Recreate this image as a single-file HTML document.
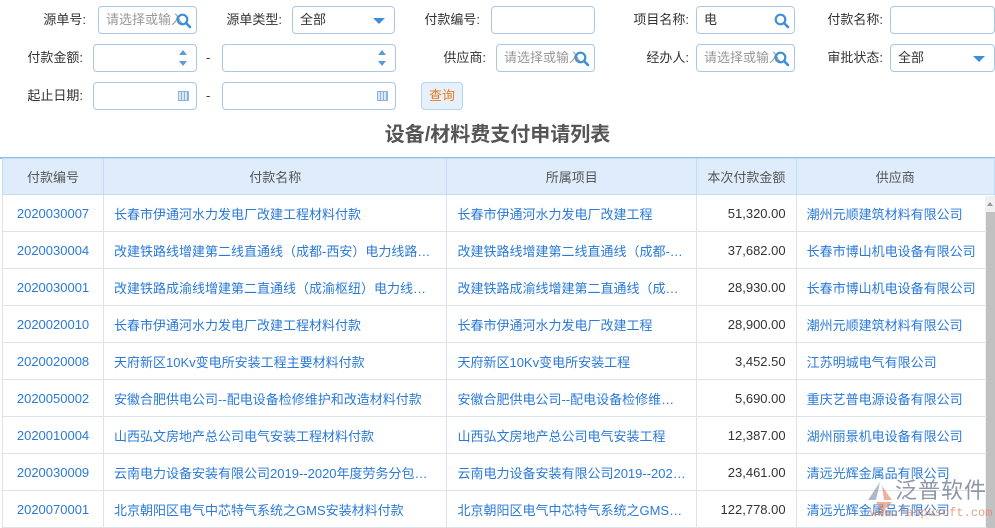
<!DOCTYPE html>
<html><head><meta charset="utf-8">
<style>
*{box-sizing:border-box;margin:0;padding:0}
body{width:995px;height:528px;overflow:hidden;background:#fff;font-family:"Liberation Sans","Noto Sans CJK SC",sans-serif;font-size:13px;color:#333;position:relative}
.a{position:absolute}
.lbl{position:absolute;text-align:right;font-size:13px;color:#333;line-height:26px}
.in{position:absolute;height:28px;border:1px solid #a9c8e8;border-radius:4px;background:#fff;line-height:26px;padding-left:7px;font-size:13px;color:#333;overflow:hidden;white-space:nowrap}
.ph{color:#999}
.srch{position:absolute;right:4px;top:6px}
.tri{position:absolute;right:9px;top:11px;width:0;height:0;border-left:6px solid transparent;border-right:6px solid transparent;border-top:6px solid #3b8fd8}
.spin{position:absolute;right:9px;top:5px;width:8px;height:16px}
.spin:before{content:"";position:absolute;left:0;top:0;border-left:4px solid transparent;border-right:4px solid transparent;border-bottom:5px solid #5a9bd8}
.spin:after{content:"";position:absolute;left:0;bottom:0;border-left:4px solid transparent;border-right:4px solid transparent;border-top:5px solid #5a9bd8}
.cal{position:absolute;right:7px;top:8px;width:11px;height:10px;border:1px solid #8fb3dd;background:repeating-linear-gradient(90deg,transparent 0 2px,#8fb3dd 2px 3px),#dbe8f7}
.dash{position:absolute;font-size:13px;line-height:26px}
table{position:absolute;left:2px;top:158px;border-collapse:collapse;table-layout:fixed}
td,th{height:37px;border:1px solid #dde3ea;white-space:nowrap;overflow:hidden;font-weight:normal;font-size:13px}
th{height:36px;background:#deecfb;color:#555;text-align:center;border-color:#c5dbf1}
td{color:#2a7ad6;padding-left:10px}
td.n{text-align:center;padding-left:0}
td.m{text-align:right;color:#333;padding-right:10px}
</style></head><body>

<div class="lbl" style="left:0;width:86px;top:7px">源单号:</div>
<div class="in" style="left:98px;top:6px;width:99px"><span class="ph">请选择或输入</span>
<svg class="srch" width="16" height="16" viewBox="0 0 16 16"><circle cx="6.5" cy="6.5" r="4.8" fill="none" stroke="#3b8fd8" stroke-width="2.2"/><path d="M10 10l4 4" stroke="#3b8fd8" stroke-width="2.6" stroke-linecap="round"/></svg></div>
<div class="lbl" style="left:200px;width:82px;top:7px">源单类型:</div>
<div class="in" style="left:292px;top:6px;width:103px">全部<i class="tri"></i></div>
<div class="lbl" style="left:400px;width:80px;top:7px">付款编号:</div>
<div class="in" style="left:491px;top:6px;width:104px"></div>
<div class="lbl" style="left:600px;width:89px;top:7px">项目名称:</div>
<div class="in" style="left:696px;top:6px;width:99px">电<svg class="srch" width="16" height="16" viewBox="0 0 16 16"><circle cx="6.5" cy="6.5" r="4.8" fill="none" stroke="#3b8fd8" stroke-width="2.2"/><path d="M10 10l4 4" stroke="#3b8fd8" stroke-width="2.6" stroke-linecap="round"/></svg></div>
<div class="lbl" style="left:800px;width:83px;top:7px">付款名称:</div>
<div class="in" style="left:890px;top:6px;width:105px"></div>

<div class="lbl" style="left:0;width:83px;top:45px">付款金额:</div>
<div class="in" style="left:93px;top:44px;width:104px"><i class="spin"></i></div>
<div class="dash" style="left:206px;top:45px">-</div>
<div class="in" style="left:222px;top:44px;width:174px"><i class="spin"></i></div>
<div class="lbl" style="left:400px;width:86px;top:45px">供应商:</div>
<div class="in" style="left:496px;top:44px;width:99px"><span class="ph">请选择或输入</span><svg class="srch" width="16" height="16" viewBox="0 0 16 16"><circle cx="6.5" cy="6.5" r="4.8" fill="none" stroke="#3b8fd8" stroke-width="2.2"/><path d="M10 10l4 4" stroke="#3b8fd8" stroke-width="2.6" stroke-linecap="round"/></svg></div>
<div class="lbl" style="left:600px;width:89px;top:45px">经办人:</div>
<div class="in" style="left:696px;top:44px;width:99px"><span class="ph">请选择或输入</span><svg class="srch" width="16" height="16" viewBox="0 0 16 16"><circle cx="6.5" cy="6.5" r="4.8" fill="none" stroke="#3b8fd8" stroke-width="2.2"/><path d="M10 10l4 4" stroke="#3b8fd8" stroke-width="2.6" stroke-linecap="round"/></svg></div>
<div class="lbl" style="left:800px;width:83px;top:45px">审批状态:</div>
<div class="in" style="left:890px;top:44px;width:105px">全部<i class="tri"></i></div>

<div class="lbl" style="left:0;width:83px;top:83px">起止日期:</div>
<div class="in" style="left:93px;top:82px;width:104px"><i class="cal"></i></div>
<div class="dash" style="left:206px;top:83px">-</div>
<div class="in" style="left:222px;top:82px;width:174px"><i class="cal"></i></div>
<div class="a" style="left:421px;top:82px;width:42px;height:28px;border:1px solid #b5d4f0;border-radius:4px;background:#e6f1fc;color:#e57a1c;text-align:center;line-height:26px">查询</div>

<div class="a" style="left:0;width:995px;top:120px;text-align:center;font-size:20px;font-weight:bold;color:#555;line-height:30px">设备/材料费支付申请列表</div>
<div class="a" style="left:0;top:157px;width:995px;height:2px;background:#8cc0ee"></div>

<table>
<colgroup><col style="width:102px"><col style="width:344px"><col style="width:250px"><col style="width:100px"><col style="width:199px"></colgroup>
<tr><th>付款编号</th><th>付款名称</th><th>所属项目</th><th>本次付款金额</th><th>供应商</th></tr>
<tr><td class="n">2020030007</td><td>长春市伊通河水力发电厂改建工程材料付款</td><td>长春市伊通河水力发电厂改建工程</td><td class="m">51,320.00</td><td>潮州元顺建筑材料有限公司</td></tr>
<tr><td class="n">2020030004</td><td>改建铁路线增建第二线直通线（成都-西安）电力线路…</td><td>改建铁路线增建第二线直通线（成都-…</td><td class="m">37,682.00</td><td>长春市博山机电设备有限公司</td></tr>
<tr><td class="n">2020030001</td><td>改建铁路成渝线增建第二直通线（成渝枢纽）电力线…</td><td>改建铁路成渝线增建第二直通线（成…</td><td class="m">28,930.00</td><td>长春市博山机电设备有限公司</td></tr>
<tr><td class="n">2020020010</td><td>长春市伊通河水力发电厂改建工程材料付款</td><td>长春市伊通河水力发电厂改建工程</td><td class="m">28,900.00</td><td>潮州元顺建筑材料有限公司</td></tr>
<tr><td class="n">2020020008</td><td>天府新区10Kv变电所安装工程主要材料付款</td><td>天府新区10Kv变电所安装工程</td><td class="m">3,452.50</td><td>江苏明城电气有限公司</td></tr>
<tr><td class="n">2020050002</td><td>安徽合肥供电公司--配电设备检修维护和改造材料付款</td><td>安徽合肥供电公司--配电设备检修维…</td><td class="m">5,690.00</td><td>重庆艺普电源设备有限公司</td></tr>
<tr><td class="n">2020010004</td><td>山西弘文房地产总公司电气安装工程材料付款</td><td>山西弘文房地产总公司电气安装工程</td><td class="m">12,387.00</td><td>湖州丽景机电设备有限公司</td></tr>
<tr><td class="n">2020030009</td><td>云南电力设备安装有限公司2019--2020年度劳务分包…</td><td>云南电力设备安装有限公司2019--202…</td><td class="m">23,461.00</td><td>清远光辉金属品有限公司</td></tr>
<tr><td class="n">2020070001</td><td>北京朝阳区电气中芯特气系统之GMS安装材料付款</td><td>北京朝阳区电气中芯特气系统之GMS…</td><td class="m">122,778.00</td><td>清远光辉金属品有限公司</td></tr>
</table>

<div class="a" style="left:985px;top:196px;width:10px;height:332px;background:#f0f0f0"></div>
<div class="a" style="left:987px;top:202px;width:0;height:0;border-left:3px solid transparent;border-right:3px solid transparent;border-bottom:4px solid #999"></div>
<div class="a" style="left:986px;top:212px;width:9px;height:316px;background:#c1c1c1"></div>

<div class="a" style="left:866px;top:480px;width:28px;height:34px;opacity:.6">
<svg width="28" height="34" viewBox="0 0 28 34"><path d="M14 2 L2 20 L10 20 Z" fill="#7a8aa8"/><path d="M10 22 L26 22 L16 32 Z" fill="#e08060"/><path d="M16 6 L26 20 L18 20 Z" fill="#e08060"/></svg></div>
<div class="a" style="left:895px;top:477px;font-size:22px;color:#7a8698;opacity:.85;letter-spacing:1px;line-height:28px">泛普软件</div>
<div class="a" style="left:870px;top:506px;font-size:12px;color:#e08a6a;opacity:.8;font-family:'Liberation Mono',monospace">www.fanpusoft.com</div>
</body></html>
